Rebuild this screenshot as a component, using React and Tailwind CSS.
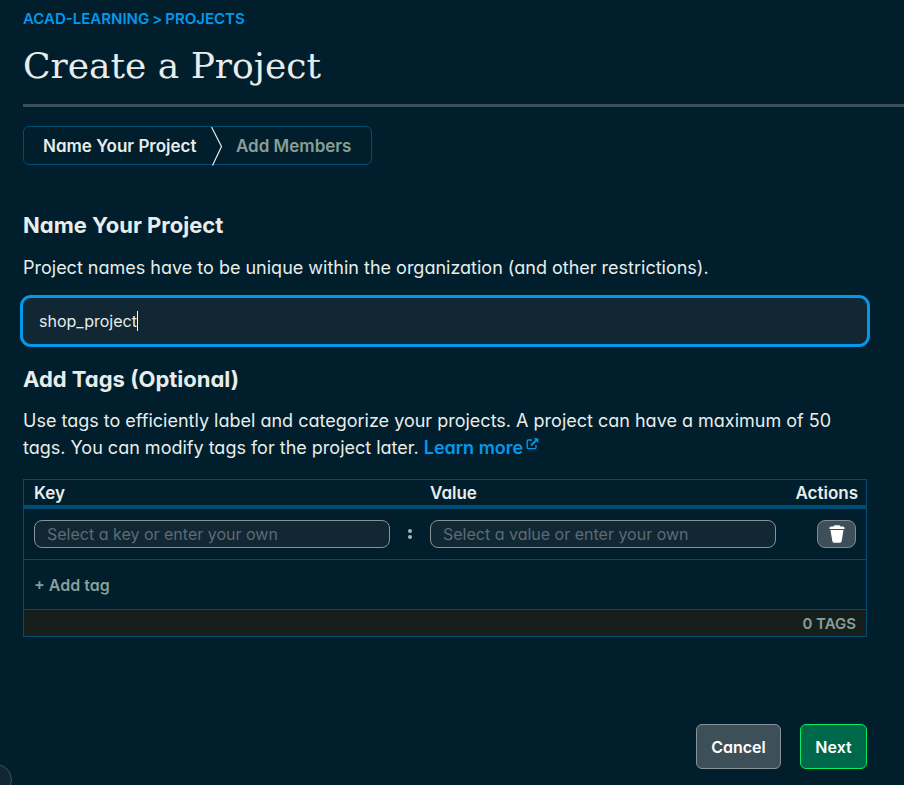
import React from "react";

function Breadcrumb() {
  return (
    <nav aria-label="Breadcrumb" className="flex gap-[3px] text-[15px] leading-5 font-semibold text-[#0498ec]">
      <a href="#org">ACAD-LEARNING</a>
      <span>&gt;</span>
      <a href="#projects">PROJECTS</a>
    </nav>
  );
}

function Steps() {
  return (
    <ol className="mt-[19px] flex h-[39px] w-[349px] items-center rounded-md border border-[#004d73] text-[17px] leading-6 font-semibold">
      <li className="flex-1 pl-[19px] whitespace-nowrap">Name Your Project</li>
      <li aria-hidden="true">
        <svg className="block" width="12" height="40" viewBox="0 0 12 40" fill="none" stroke="#e8edeb" strokeWidth="1.2">
          <path d="M0.500 1 L10.500 20.500 L1.500 39.500" />
        </svg>
      </li>
      <li className="w-[148px] pl-[13px] whitespace-nowrap text-[#889f97]">Add Members</li>
    </ol>
  );
}

function ExternalIcon() {
  return (
    <svg className="mb-1 ml-[3px] inline-block align-baseline" width="13" height="12" viewBox="0 0 13 12" fill="none" stroke="#0498ec" strokeWidth="1.300" aria-hidden="true">
      <path d="M6 2 H2.200 Q1.200 2 1.200 3 V9.600 Q1.200 10.600 2.200 10.600 H9 Q10 10.600 10 9.600 V7" />
      <path d="M5 7.500 L10.500 2" strokeWidth="1.800" />
      <path d="M7.500 0.300 H12.300 V5.100 Z" fill="#0498ec" stroke="none" />
    </svg>
  );
}

function TrashIcon() {
  return (
    <svg width="16" height="18" viewBox="0 0 16 18" fill="#ffffff" aria-hidden="true">
      <path d="M0.500 3 Q0.500 1.500 2 1.500 H4.500 Q5 0.300 6 0.300 H10 Q11 0.300 11.500 1.500 H14 Q15.500 1.500 15.500 3 V4 H0.500 Z" />
      <path d="M1.500 5 H14.500 L12.700 16 Q12.400 17.700 11 17.700 H5 Q3.600 17.700 3.300 16 Z" />
    </svg>
  );
}

const fieldClass =
  "h-7 w-full rounded-lg border border-[#889397] bg-[#112733] px-3 text-[16px] text-[#e8edeb] outline-none placeholder:text-[#5c6c75]";

function TagsTable() {
  return (
    <table className="mt-[18px] w-full table-fixed border-separate border-spacing-0 border border-[#004d73]">
      <colgroup>
        <col />
        <col className="w-[356px]" />
        <col className="w-20" />
      </colgroup>
      <thead>
        <tr className="text-[17px] leading-[23px] font-semibold">
          <th className="border-b-4 border-[#004d73] pt-[2px] pl-[10px] text-left font-semibold">Key</th>
          <th className="border-b-4 border-[#004d73] pt-[2px] text-left font-semibold">Value</th>
          <th className="border-b-4 border-[#004d73] pt-[2px] pr-2 text-right font-semibold">Actions</th>
        </tr>
      </thead>
      <tbody>
        <tr>
          <td className="border-b border-[#004d73] py-[11px] pl-[10px]">
            <div className="flex items-center">
              <input aria-label="Key" placeholder="Select a key or enter your own" className={fieldClass} />
              <span className="flex w-10 shrink-0 flex-col items-center gap-[2px]" aria-hidden="true">
                <span className="size-1 rounded-full bg-[#a3b8b0]" />
                <span className="size-1 rounded-full bg-[#a3b8b0]" />
              </span>
            </div>
          </td>
          <td className="border-b border-[#004d73] py-[11px] pr-[10px]">
            <input aria-label="Value" placeholder="Select a value or enter your own" className={"block " + fieldClass} />
          </td>
          <td className="border-b border-[#004d73] py-[11px] pr-[10px]">
            <button type="button" aria-label="Delete tag" className="ml-auto flex h-7 w-[39px] items-center justify-center rounded-lg border border-[#7f8b90] bg-[#3d4f58]">
              <TrashIcon />
            </button>
          </td>
        </tr>
        <tr>
          <td colSpan={3} className="h-[50px] border-b border-[#004d73] pl-[10px]">
            <button type="button" className="block text-[16px] leading-5 font-semibold text-[#889f97]">+ Add tag</button>
          </td>
        </tr>
      </tbody>
      <tfoot>
        <tr>
          <td colSpan={3} className="bg-[#161f1b] pt-[2px] pr-[10px] text-right text-[15px] leading-6 font-semibold text-[#889f97]">0 TAGS</td>
        </tr>
      </tfoot>
    </table>
  );
}

export default function App() {
  return (
    <div className="relative min-h-screen overflow-hidden bg-[#001e2b] pt-[9px] pb-4 pl-[23px] font-['Inter','Liberation_Sans',sans-serif] text-[#e8edeb] [font-feature-settings:'cv11']">
      <header className="border-b-3 border-[#3d4f58] pb-[13px]">
        <Breadcrumb />
        <h1 className="mt-3 font-['DejaVu_Serif','Liberation_Serif',serif] text-[36px] leading-[50px]">Create a Project</h1>
      </header>
      <main className="pr-[37px]">
        <Steps />
        <form onSubmit={(e) => e.preventDefault()}>
          <h2 className="mt-11 text-[22px] leading-8 font-bold">
            <label htmlFor="project-name">Name Your Project</label>
          </h2>
          <p className="mt-[13px] text-[18px] leading-[27px]">
            Project names have to be unique within the organization (and other restrictions).
          </p>
          <div className="mt-[17px] flex h-[46px] items-center rounded-lg bg-[#112733] pl-4 ring-3 ring-[#0498ec]">
            <input id="project-name" defaultValue="shop_project" className="text-[16px] leading-5 caret-transparent outline-none [field-sizing:content]" />
            <span className="h-5 w-px bg-white" aria-hidden="true" />
          </div>
          <h2 className="mt-[19px] text-[22px] leading-8 font-bold">Add Tags (Optional)</h2>
          <p className="mt-3 text-[18px] leading-[27px]">
            Use tags to efficiently label and categorize your projects. A project can have a maximum of 50 tags. You can modify tags for the project later.{" "}
            <a href="#tags" className="font-semibold text-[#0498ec]">
              Learn more
              <ExternalIcon />
            </a>
          </p>
          <TagsTable />
          <div className="mt-[87px] flex justify-end gap-[19px] text-[16px] font-semibold text-white">
            <button type="button" className="h-[45px] w-[85px] rounded-md border border-[#889397] bg-[#3d4f58]">Cancel</button>
            <button type="submit" className="h-[45px] w-[67px] rounded-md border border-[#00ed64] bg-[#00684a]">Next</button>
          </div>
        </form>
      </main>
      <div className="absolute -bottom-[11px] -left-5 size-8 rounded-full border border-[#3d4f58] bg-[#112733]" aria-hidden="true" />
    </div>
  );
}
